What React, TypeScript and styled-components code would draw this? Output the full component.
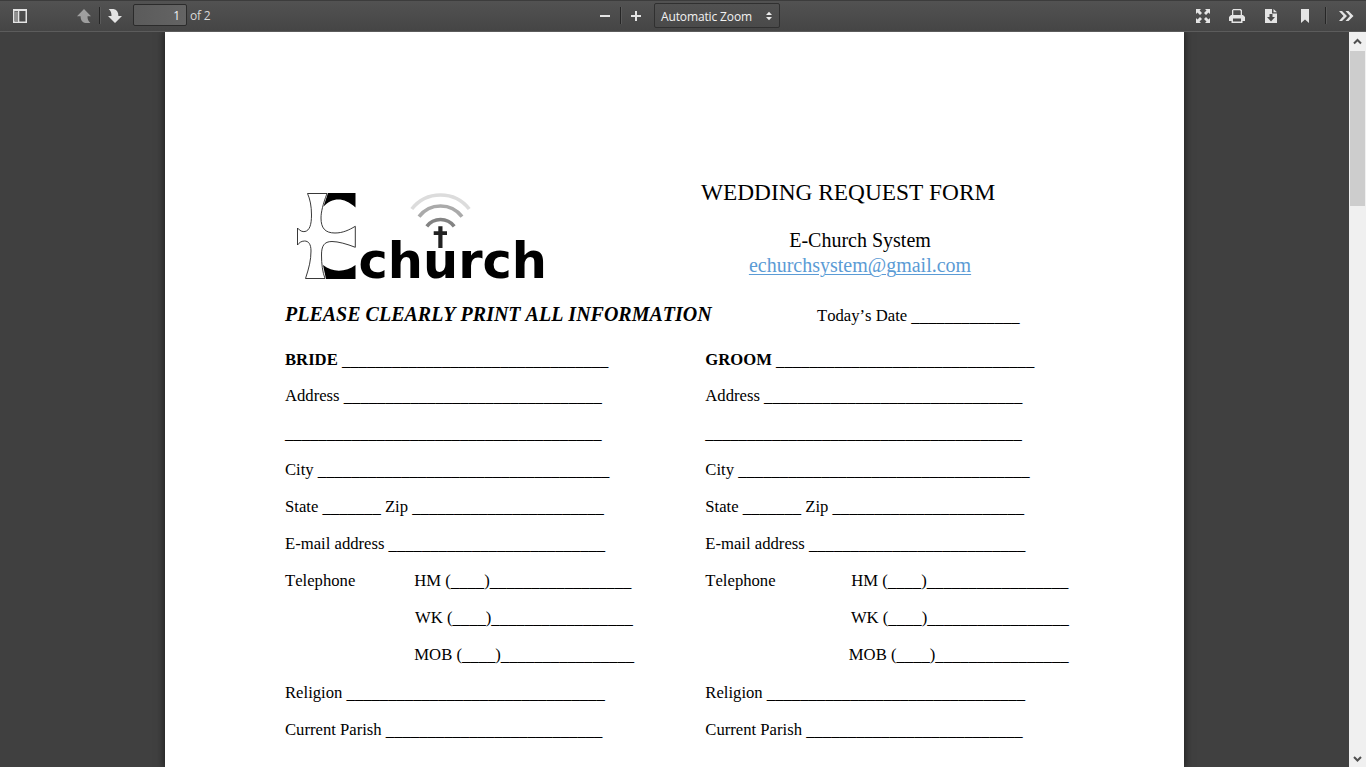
import React from 'react';
import styled, { createGlobalStyle } from 'styled-components';

const GlobalStyle = createGlobalStyle`
  *, *::before, *::after { box-sizing: border-box; }
  body { margin: 0; overflow: hidden; background: #404040; }
`;

const Viewer = styled.div`
  display: flex;
  flex-direction: column;
  width: 1366px;
  height: 767px;
  overflow: hidden;
`;

const Toolbar = styled.header`
  display: flex;
  align-items: flex-start;
  flex: none;
  height: 32px;
  background: linear-gradient(#525252, #454545);
  border-top: 1px solid #3c3c3c;
  border-bottom: 1px solid #5c5c5c;
  box-shadow: 0 1px 0 rgba(0, 0, 0, 0.25);
  font: 12px/20px 'Open Sans', 'Noto Sans', sans-serif;
  color: #d9d9d9;
`;

const Tool = styled.svg<{ $ml: number; $dim?: boolean }>`
  flex: none;
  width: 16px;
  height: 16px;
  margin: 7px 0 0 ${p => p.$ml}px;
  fill: #e4e4e4;
  opacity: ${p => (p.$dim ? 0.55 : 1)};
`;

const Divider = styled.span<{ $ml: number }>`
  flex: none;
  width: 2px;
  height: 17px;
  margin: 6px 0 0 ${p => p.$ml}px;
  border-left: 1px solid #262626;
  border-right: 1px solid #5a5a5a;
`;

const PageNumber = styled.span`
  flex: none;
  width: 54px;
  height: 22px;
  margin: 3px 0 0 10px;
  padding-right: 6px;
  border: 1px solid #2b2b2b;
  border-radius: 2px;
  background: linear-gradient(90deg, #5b5b5b, #646464);
  line-height: 22px;
  text-align: right;
  color: #f2f2f2;
`;

const PageCount = styled.span`
  width: 30px;
  margin: 5px 0 0 3px;
  letter-spacing: -0.2px;
`;

const ZoomSelect = styled.span`
  display: flex;
  align-items: center;
  justify-content: space-between;
  flex: none;
  width: 126px;
  height: 25px;
  margin: 2px 0 0 10px;
  padding: 2px 6px 0;
  border: 1px solid #303030;
  border-radius: 2px;
  background: linear-gradient(#515151, #4a4a4a);
  color: #f2f2f2;
  letter-spacing: -0.13px;
`;

const SelectArrows = styled.svg`
  width: 8px;
  height: 10px;
  margin-top: -2px;
  fill: #ececec;
`;

const Body = styled.div`
  display: flex;
  flex: 1;
  min-height: 0;
  background: #404040;
`;

const Canvas = styled.main`
  flex: 1;
  min-width: 0;
  padding-left: 165px;
  overflow: hidden;
`;

const Paper = styled.article`
  width: 1019px;
  height: 735px;
  padding: 145px 0 0 120px;
  overflow: hidden;
  background: #fff;
  box-shadow: 0 0 8px 1px rgba(0, 0, 0, 0.55);
  font: 16.667px/37px 'Liberation Serif', 'Times New Roman', serif;
  font-kerning: none;
  color: #000;
  white-space: pre;
`;

const Letterhead = styled.div`
  display: flex;
  height: 119px;
`;

const Logo = styled.svg`
  flex: none;
  width: 270px;
  height: 110px;
  margin: 8px 0 0 5px;
`;

const Heading = styled.div`
  width: 320px;
  margin-left: 141px;
`;

const Title = styled.h1`
  margin: 0 0 21px;
  font-size: 23.333px;
  font-weight: normal;
  line-height: 30px;
`;

const Contact = styled.div`
  width: 318px;
  font-size: 20px;
  line-height: 25px;
  text-align: center;
`;

const Mail = styled.span`
  color: #5b9bd5;
  text-decoration: underline;
  text-decoration-thickness: 1px;
  text-underline-offset: 2px;
`;

const Notice = styled.div`
  display: flex;
  align-items: baseline;
  height: 37px;
  margin-bottom: 8px;

  em {
    width: 532px;
    font-size: 20px;
    font-weight: bold;
  }
`;

const Columns = styled.div`
  display: grid;
  grid-template-columns: 420.3px 1fr;
`;

const Field = styled.div<{ $h?: number }>`
  height: ${p => p.$h ?? 37}px;
`;

const Label = styled.span<{ $w: number }>`
  display: inline-block;
  width: ${p => p.$w}px;
`;

const Blank = styled.span`
  display: inline-block;
  height: 35px;
  line-height: 35px;
  vertical-align: -1px;
`;

const Scrollbar = styled.aside`
  display: flex;
  flex-direction: column;
  align-items: center;
  justify-content: space-between;
  flex: none;
  width: 17px;
  background: #f0f0f0;
`;

const Thumb = styled.div`
  width: 15px;
  height: 155px;
  margin-bottom: auto;
  background: #cdcdcd;
`;

const ScrollArrow = styled.svg`
  width: 17px;
  height: 19px;
  fill: none;
  stroke: #505050;
  stroke-width: 2;
`;

function Line({ n }: { n: number }) {
  return <Blank>{'_'.repeat(n)}</Blank>;
}

interface Person {
  title: string;
  titleLine: number;
  phones: { kind: string; length: number; at: number }[];
}

const people: Person[] = [
  {
    title: 'BRIDE',
    titleLine: 32,
    phones: [
      { kind: 'HM', length: 17, at: 129.3 },
      { kind: 'WK', length: 17, at: 130 },
      { kind: 'MOB', length: 16, at: 129.3 },
    ],
  },
  {
    title: 'GROOM',
    titleLine: 31,
    phones: [
      { kind: 'HM', length: 17, at: 146 },
      { kind: 'WK', length: 17, at: 145.6 },
      { kind: 'MOB', length: 16, at: 143.5 },
    ],
  },
];

function PersonForm({ person }: { person: Person }) {
  return (
    <section>
      <Field $h={36}><b>{person.title}</b> <Line n={person.titleLine} /></Field>
      <Field>Address <Line n={31} /></Field>
      <Field><Line n={38} /></Field>
      <Field>City <Line n={35} /></Field>
      <Field>State <Line n={7} /> Zip <Line n={23} /></Field>
      <Field>E-mail address <Line n={26} /></Field>
      {person.phones.map((p, i) => (
        <Field key={p.kind} $h={p.kind === 'MOB' ? 38 : 37}>
          <Label $w={p.at}>{i === 0 ? 'Telephone' : ''}</Label>
          {p.kind} (<Line n={4} />)<Line n={p.length} />
        </Field>
      ))}
      <Field>Religion <Line n={31} /></Field>
      <Field>Current Parish <Line n={26} /></Field>
    </section>
  );
}

function ChurchLogo() {
  return (
    <Logo viewBox="290 185 270 110">
      <path
        d="M307.5 193.5H327C323 204 321 212 321 218C321 228 325 233 335 233C343 233 349 230 355.3 226.3V247.3C347 244 338 241.5 332 241.5C324 241.5 321.5 246 321.5 255C321.5 264 322.5 272 325 278.5H305.5C309 268 311 260 311 251C311 244 308.5 241 304.5 241C301 241 299 243 297.5 245V228C300 231 302.5 232 305 231.5C309.5 230.5 311.5 225 311.5 215C311.5 206 310 199 307.5 193.5Z"
        fill="#fff"
        stroke="#222"
        strokeWidth="0.9"
      />
      <path d="M328 193H355.5V207.5C343 196 332 198 323.5 206.5Z" />
      <path d="M323 265C333 273 346 272 355.5 265V279H326Z" />
      <g fill="none" strokeWidth="3.6">
        <path d="M411.8 209A36.3 36.3 0 0 1 469.2 209" stroke="#dcdcdc" />
        <path d="M419 216.7A27 27 0 0 1 462 216.7" stroke="#aaa" />
        <path d="M426.8 226.3A17.2 17.2 0 0 1 454.2 226.3" stroke="#838383" />
      </g>
      <text
        x="358.5"
        y="278"
        textLength="188.5"
        lengthAdjust="spacingAndGlyphs"
        fontFamily="'DejaVu Sans', Verdana, sans-serif"
        fontWeight="bold"
        fontSize="49.5"
      >
        church
      </text>
      <path d="M438.3 226.3h4.2v5h4.5v3.6h-4.5v13h-4.2v-13h-4.6v-3.6h4.6z" fill="#222" />
    </Logo>
  );
}

export default function App() {
  return (
    <Viewer>
      <GlobalStyle />
      <Toolbar>
        <Tool $ml={12} viewBox="0 0 16 16">
          <path fillRule="evenodd" d="M1 1h14v14H1zM2.5 3v10.5h11V3z" />
          <path d="M3 3.5h3v9.5H3z" opacity=".45" />
          <path d="M6 3h1.3v11H6z" />
        </Tool>
        <Tool $ml={48} $dim viewBox="0 0 16 16">
          <path d="M8 1L15 8.3H11.5C11.4 11 12.3 13.3 14.4 15H9.5C6 14.4 4.6 12 4.6 8.3H1Z" />
        </Tool>
        <Divider $ml={7} />
        <Tool $ml={6} viewBox="0 0 16 16">
          <path d="M8 15L15 8H11.4C11.4 4 9.8 1.5 6.5 1H1.7C3.8 2.7 4.6 5 4.5 8H1Z" />
        </Tool>
        <PageNumber>1</PageNumber>
        <PageCount>of 2</PageCount>
        <Tool $ml={377} viewBox="0 0 16 16"><path d="M3 7h10v2H3z" /></Tool>
        <Divider $ml={7} />
        <Tool $ml={6} viewBox="0 0 16 16"><path d="M3 7h4V3h2v4h4v2H9v4H7V9H3z" /></Tool>
        <ZoomSelect>
          Automatic Zoom
          <SelectArrows viewBox="0 0 8 10"><path d="M4 .7L7 4H1zM4 9.3L1 6H7z" /></SelectArrows>
        </ZoomSelect>
        <Tool $ml={415} viewBox="0 0 16 16">
          <path d="M1 1h5L4.6 2.4 7 5 5 7 2.5 4.6 1 6zM15 1v5l-1.5-1.4L11 7 9 5l2.5-2.6L10 1zM1 15v-5l1.5 1.4L5 9l2 2-2.5 2.6L6 15zM15 15h-5l1.5-1.4L9 11l2-2 2.5 2.4L15 10z" />
        </Tool>
        <Tool $ml={18} viewBox="0 0 16 16">
          <path fillRule="evenodd" d="M3 7V2.2L4.2 1h7.6L13 2.2V7h1l2 2v4h-2.5v2h-11v-2H0V9l2-2zM4.3 7h7.4V3l-.7-.7H4.3zM4 10.5v3h8v-3z" />
        </Tool>
        <Tool $ml={18} viewBox="0 0 16 16">
          <path fillRule="evenodd" d="M2 1h7v4.5h5V15H2zM6.5 6v3H4l4 4.5L12 9H9.5V6z" />
          <path d="M10.5 1L14 4.3h-3.5z" />
        </Tool>
        <Tool $ml={18} viewBox="0 0 16 16"><path d="M4 1h8v14l-4-3.5L4 15z" /></Tool>
        <Divider $ml={12} />
        <Tool $ml={11} viewBox="0 0 16 16">
          <path d="M1 3h3l5 5-5 5H1l4.5-5zM7.5 3h3l5 5-5 5h-3L12 8z" />
        </Tool>
      </Toolbar>
      <Body>
        <Canvas>
          <Paper>
            <Letterhead>
              <ChurchLogo />
              <Heading>
                <Title>WEDDING REQUEST FORM</Title>
                <Contact>E-Church System</Contact>
                <Contact><Mail>echurchsystem@gmail.com</Mail></Contact>
              </Heading>
            </Letterhead>
            <Notice>
              <em>PLEASE CLEARLY PRINT ALL INFORMATION</em>
              <span>Today’s Date <Line n={13} /></span>
            </Notice>
            <Columns>
              {people.map(p => <PersonForm key={p.title} person={p} />)}
            </Columns>
          </Paper>
        </Canvas>
        <Scrollbar>
          <ScrollArrow viewBox="0 0 17 19"><path d="M5 11.5L8.5 8L12 11.5" /></ScrollArrow>
          <Thumb />
          <ScrollArrow viewBox="0 0 17 19"><path d="M5 9L8.5 12.5L12 9" /></ScrollArrow>
        </Scrollbar>
      </Body>
    </Viewer>
  );
}
